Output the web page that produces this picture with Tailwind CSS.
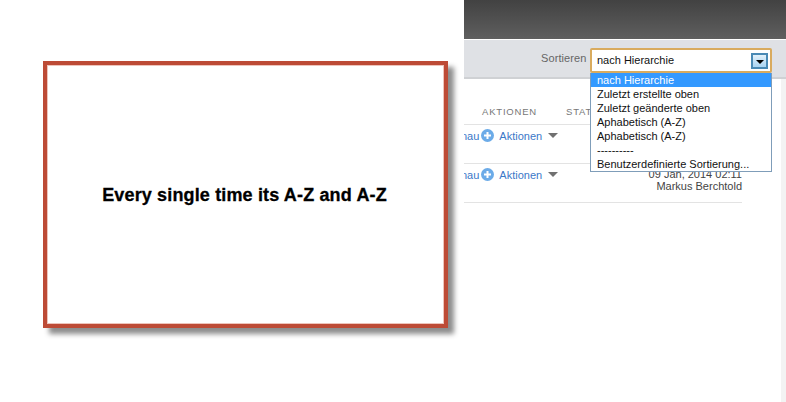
<!DOCTYPE html>
<html lang="de">
<head>
    <meta charset="UTF-8">
    <title>Sortieren</title>
    <script src="https://cdn.jsdelivr.net/npm/@tailwindcss/browser@4"></script>
</head>
<body class="bg-white font-['Liberation_Sans',Arial,sans-serif]">
    <div class="relative w-[786px] h-[402px] overflow-hidden flex">
        <div class="w-[464px] shrink-0"></div>

        <!-- Page behind the callout -->
        <div class="w-[322px] flex flex-col overflow-hidden">
            <div class="h-[39px] bg-gradient-to-b from-[#424242] to-[#5f5f5f]"></div>
            <div class="h-[39px] mt-px bg-[#dfe1e5] border-b-2 border-[#cfd1d4] flex items-center">
                <span class="ml-[77px] text-[11px] tracking-[0.1px] text-[#666]">Sortieren</span>
            </div>

            <div class="flex flex-1">
                <div class="w-[278px] text-[11px]">
                    <div class="h-[46px] pt-[26px] border-b border-[#e3e3e3] flex text-[9.5px] tracking-[0.8px] text-[#777]">
                        <span class="ml-[18px] w-[84px]">AKTIONEN</span>
                        <span>STATUS</span>
                    </div>
                    <div class="h-[39px] border-b border-[#e3e3e3] flex items-start pt-[3px] -ml-[3px]">
                        <span class="text-[#3b78c8]">nau</span>
                        <svg class="ml-[2px] mt-[1px]" width="13" height="13" viewBox="0 0 13 13"><circle cx="6.5" cy="6.5" r="6.5" fill="#6cabe8"/><path d="M6.5 3v7M3 6.5h7" stroke="#fff" stroke-width="2"/></svg>
                        <span class="ml-[5px] w-[43px] text-[#3b78c8]">Aktionen</span>
                        <span class="ml-[6px] mt-[5px] border-x-[5px] border-x-transparent border-t-[5px] border-t-[#707070]"></span>
                    </div>
                    <div class="h-[39px] border-b border-[#e3e3e3] flex items-start pt-[3px] -ml-[3px]">
                        <span class="text-[#3b78c8]">nau</span>
                        <svg class="ml-[2px] mt-[1px]" width="13" height="13" viewBox="0 0 13 13"><circle cx="6.5" cy="6.5" r="6.5" fill="#6cabe8"/><path d="M6.5 3v7M3 6.5h7" stroke="#fff" stroke-width="2"/></svg>
                        <span class="ml-[5px] w-[43px] text-[#3b78c8]">Aktionen</span>
                        <span class="ml-[6px] mt-[5px] border-x-[5px] border-x-transparent border-t-[5px] border-t-[#707070]"></span>
                        <div class="ml-auto mt-[1px] text-right text-[#444] text-[11px] leading-[12px]">
                            <div>09 Jan, 2014 02:11</div>
                            <div>Markus Berchtold</div>
                        </div>
                    </div>
                </div>
                <div class="ml-auto w-[5px] bg-[#f3f3f3]"></div>
            </div>
        </div>

        <!-- Open select -->
        <div class="absolute left-[590px] top-[48px] w-[182px] text-[11px] text-[#111]">
            <div class="h-[25px] bg-white border-2 border-[#d9ab5e] rounded-[2px] flex items-center pl-[5px] pr-[2px]">
                <span>nach Hierarchie</span>
                <span class="ml-auto w-[17px] h-[16px] border-2 border-[#4a8ab5] bg-gradient-to-b from-[#e3f1fa] to-[#a9d4f2] flex items-center justify-center pt-[3px]">
                    <span class="border-x-[4px] border-x-transparent border-t-[4px] border-t-black"></span>
                </span>
            </div>
            <div class="w-[182px] bg-white border border-[#7f9db9] border-t-0 leading-[14px]">
                <div class="bg-[#3399ff] text-white pl-[6px]">nach Hierarchie</div>
                <div class="pl-[6px]">Zuletzt erstellte oben</div>
                <div class="pl-[6px]">Zuletzt geänderte oben</div>
                <div class="pl-[6px]">Aphabetisch (A-Z)</div>
                <div class="pl-[6px]">Aphabetisch (A-Z)</div>
                <div class="pl-[6px]">----------</div>
                <div class="pl-[6px]">Benutzerdefinierte Sortierung...</div>
            </div>
        </div>

        <!-- Callout -->
        <div class="absolute left-[43px] top-[61px] w-[405px] h-[267px] bg-white border-[4px] border-[#bd4b36] shadow-[6px_6px_5px_rgba(0,0,0,0.45),inset_0_0_0_1px_#eec4bb] flex items-center justify-center">
            <p class="text-[18px] font-bold tracking-[0.15px] text-black [-webkit-text-stroke:0.3px_black] -ml-[2px] mt-[1px]">Every single time its A-Z and A-Z</p>
        </div>
    </div>
</body>
</html>
